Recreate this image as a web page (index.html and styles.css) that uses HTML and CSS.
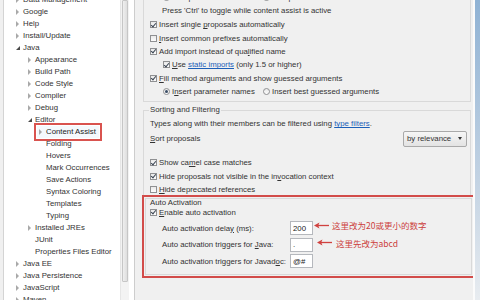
FILE: index.html
```html
<!DOCTYPE html>
<html>
<head>
<meta charset="utf-8">
<title>Preferences - Content Assist</title>
<link rel="stylesheet" href="styles.css">
</head>
<body>
<div class="window">
  <div class="tree-pane">
    <ul class="tree">
      <li class="node l0"><span class="tw col"></span><span>Data Management</span></li>
      <li class="node l0"><span class="tw col"></span><span>Google</span></li>
      <li class="node l0"><span class="tw col"></span><span>Help</span></li>
      <li class="node l0"><span class="tw col"></span><span>Install/Update</span></li>
      <li class="node l0"><span class="tw exp"></span><span>Java</span></li>
      <li class="node l1"><span class="tw col"></span><span>Appearance</span></li>
      <li class="node l1"><span class="tw col"></span><span>Build Path</span></li>
      <li class="node l1"><span class="tw col"></span><span>Code Style</span></li>
      <li class="node l1"><span class="tw col"></span><span>Compiler</span></li>
      <li class="node l1"><span class="tw col"></span><span>Debug</span></li>
      <li class="node l1"><span class="tw exp"></span><span>Editor</span></li>
      <li class="node l2 sel-row"><span class="sel"><span class="tw col"></span><span>Content Assist</span></span></li>
      <li class="node l2"><span class="tw"></span><span>Folding</span></li>
      <li class="node l2"><span class="tw"></span><span>Hovers</span></li>
      <li class="node l2"><span class="tw"></span><span>Mark Occurrences</span></li>
      <li class="node l2"><span class="tw"></span><span>Save Actions</span></li>
      <li class="node l2"><span class="tw"></span><span>Syntax Coloring</span></li>
      <li class="node l2"><span class="tw"></span><span>Templates</span></li>
      <li class="node l2"><span class="tw"></span><span>Typing</span></li>
      <li class="node l1"><span class="tw col"></span><span>Installed JREs</span></li>
      <li class="node l1"><span class="tw"></span><span>JUnit</span></li>
      <li class="node l1"><span class="tw"></span><span>Properties Files Editor</span></li>
      <li class="node l0"><span class="tw col"></span><span>Java EE</span></li>
      <li class="node l0"><span class="tw col"></span><span>Java Persistence</span></li>
      <li class="node l0"><span class="tw col"></span><span>JavaScript</span></li>
      <li class="node l0"><span class="tw col"></span><span>Maven</span></li>
    </ul>
    <div class="vscroll"><div class="thumb"></div></div>
  </div>

  <div class="main">
    <div class="group insertion">
      <div class="row sub radios top-row">
        <label class="opt first"><span class="rb on"></span><span>Completion inserts</span></label>
        <label class="opt"><span class="rb"></span><span>Completion overwrites</span></label>
      </div>
      <div class="row hint"><span>Press 'Ctrl' to toggle while content assist is active</span></div>
      <div class="row ck first-ck"><span class="cb on"></span><span>Insert single <u>p</u>roposals automatically</span></div>
      <div class="row ck"><span class="cb"></span><span><u>I</u>nsert common prefixes automatically</span></div>
      <div class="row ck"><span class="cb on"></span><span>Add import instead of qua<u>l</u>ified name</span></div>
      <div class="row ck sub"><span class="cb on"></span><span><u>U</u>se <a class="link">static imports</a> (only 1.5 or higher)</span></div>
      <div class="row ck"><span class="cb on"></span><span><u>F</u>ill method arguments and show guessed arguments</span></div>
      <div class="row ck sub radios">
        <label class="opt first"><span class="rb on"></span><span>I<u>n</u>sert parameter names</span></label>
        <label class="opt"><span class="rb"></span><span>Insert best guessed arguments</span></label>
      </div>
    </div>

    <div class="group sorting">
      <div class="gtitle">Sorting and Filtering</div>
      <div class="row types"><span>Types along with their members can be filtered using <a class="link">type filters</a>.</span></div>
      <div class="row sortrow">
        <span><u>S</u>ort proposals</span>
        <span class="select"><span>by relevance</span><span class="caret"></span></span>
      </div>
      <div class="row ck2 first-ck2"><span class="cb on"></span><span>Show ca<u>m</u>el case matches</span></div>
      <div class="row ck2"><span class="cb on"></span><span>Hide proposals not visible in the in<u>v</u>ocation context</span></div>
      <div class="row ck2"><span class="cb"></span><span><u>H</u>ide deprecated references</span></div>
    </div>

    <div class="annot">
      <div class="group auto">
        <div class="row atitle"><span>Auto Activation</span></div>
        <div class="row enable"><span class="cb on"></span><span><u>E</u>nable auto activation</span></div>
        <div class="row field first-field">
          <span class="flabel">Auto activation dela<u>y</u> (ms):</span>
          <span class="input">200</span>
          <span class="note">
            <svg class="arrow" width="15" height="7" viewBox="0 0 15 7"><line x1="3" y1="3.5" x2="15" y2="3.5" stroke="#d0413f" stroke-width="1.3"/><polygon points="0,3.5 5.5,0.6 4.2,3.5 5.5,6.4" fill="#d0413f"/></svg>
            <span class="ntext">这里改为20或更小的数字</span>
          </span>
        </div>
        <div class="row field">
          <span class="flabel">Auto activation triggers for <u>J</u>ava:</span>
          <span class="input">.</span>
          <span class="note n2">
            <svg class="arrow" width="15" height="7" viewBox="0 0 15 7"><line x1="3" y1="3.5" x2="15" y2="3.5" stroke="#d0413f" stroke-width="1.3"/><polygon points="0,3.5 5.5,0.6 4.2,3.5 5.5,6.4" fill="#d0413f"/></svg>
            <span class="ntext">这里先改为abcd</span>
          </span>
        </div>
        <div class="row field">
          <span class="flabel">Auto activation triggers for Javad<u>o</u>c:</span>
          <span class="input">@#</span>
        </div>
      </div>
    </div>
  </div>

  <div class="frame"></div>
</div>
</body>
</html>
```

FILE: styles.css
```css
* { box-sizing: border-box; margin: 0; padding: 0; }
html, body { width: 480px; height: 300px; overflow: hidden; }
body {
  background: #f0f0f0;
  font-family: "Liberation Sans", Arial, sans-serif;
  font-size: 7.8px;
  color: #333;
}
u { text-decoration: underline; text-underline-offset: 1px; }

.window { display: flex; height: 300px; }

/* ---------- tree ---------- */
.tree-pane {
  width: 132px;
  margin-left: 3px;
  display: flex;
  background: #fff;
  border-left: 1px solid #d4d4d4;
  border-right: 1px solid #cdcdcd;
  padding-right: 5px;
}
.tree {
  list-style: none;
  width: 116px;
  margin-top: -6px;
  overflow: hidden;
}
.node {
  height: 12px;
  line-height: 12px;
  display: flex;
  align-items: center;
  white-space: nowrap;
  color: #333;
}
.l0 { padding-left: 12px; }
.l1 { padding-left: 24px; }
.l2 { padding-left: 35px; }
.tw { width: 7px; height: 12px; flex: none; display: flex; align-items: center; }
.tw.col::before {
  content: "";
  width: 0; height: 0;
  border-left: 3.5px solid #a9a9a9;
  border-top: 3.5px solid transparent;
  border-bottom: 3.5px solid transparent;
}
.tw.exp::before {
  content: "";
  width: 0; height: 0;
  border-bottom: 4px solid #4a4a4a;
  border-left: 4px solid transparent;
}
.sel-row { padding-left: 33px; }
.sel {
  display: flex;
  align-items: center;
  height: 12px;
  padding: 0 3px 0 2px;
  background: #f4f9fd;
  outline: 2px solid #d9534f;
  outline-offset: 1px;
  color: #222;
}

.vscroll {
  width: 9px;
  background: #f3f3f3;
  border-left: 1px solid #e6e6e6;
  padding: 0 1px;
}
.vscroll .thumb {
  height: 282px;
  border: 1px solid #c6c6c6;
  border-radius: 1px;
  background: linear-gradient(90deg, #efefef, #dedede);
}

/* ---------- main ---------- */
.main {
  flex: 1;
  padding: 0 2px 0 8px;
}
.group {
  border: 1px solid #d9d9d9;
}
.row {
  display: flex;
  align-items: center;
  white-space: nowrap;
}
.insertion {
  margin-top: -15px;
  padding: 4px 0 2.6px 6px;
}
.top-row { height: 14px; }
.hint { height: 13px; padding-left: 12px; }
.ck { height: 13.4px; }
.first-ck { margin-top: 1px; }
.sub { padding-left: 13px; }
.opt { display: flex; align-items: center; }
.opt.first { width: 100px; }

.cb {
  width: 7px; height: 7px;
  flex: none;
  margin-right: 2px;
  border: 1px solid #8f9092;
  background: linear-gradient(#e9e9e9, #fdfdfd);
  display: flex;
  align-items: center;
  justify-content: center;
}
.cb.on::after {
  content: "";
  width: 2px; height: 4px;
  margin-top: -1px;
  border-right: 1.4px solid #3a4553;
  border-bottom: 1.4px solid #3a4553;
  transform: rotate(40deg);
}
.rb {
  width: 7px; height: 7px;
  flex: none;
  margin-right: 2px;
  border: 1px solid #8f9092;
  border-radius: 50%;
  background: linear-gradient(#e9e9e9, #fdfdfd);
  display: flex;
  align-items: center;
  justify-content: center;
}
.rb.on::after {
  content: "";
  width: 3px; height: 3px;
  border-radius: 50%;
  background: #3b4e66;
}
.link { color: #1c5fb8; text-decoration: underline; }

.sorting {
  margin-top: 8px;
  padding: 0 3px 0 6px;
  border-bottom: 0;
}
.gtitle {
  width: max-content;
  height: 12px;
  line-height: 12px;
  margin: -7px 0 0 -1px;
  padding: 0 1px;
  background: #f0f0f0;
}
.types { height: 14px; margin-top: 1px; }
.sortrow { height: 16px; justify-content: space-between; }
.select {
  width: 64px;
  height: 16px;
  border: 1px solid #a9a9a9;
  border-radius: 2px;
  background: linear-gradient(#f6f6f6, #e3e3e3);
  display: flex;
  align-items: center;
  justify-content: space-between;
  padding: 0 4px 0 3px;
  color: #333;
}
.caret {
  width: 0; height: 0;
  border-top: 3px solid #333;
  border-left: 2.5px solid transparent;
  border-right: 2.5px solid transparent;
}
.ck2 { height: 13.5px; }
.first-ck2 { margin-top: 9px; }

/* ---------- annotated auto activation ---------- */
.annot {
  margin: -1.5px -4px 0 -1px;
  border: 2px solid #d24c4a;
}
.auto {
  margin: 1px;
  padding: 0 0 4.5px 4px;
}
.atitle { height: 7px; line-height: 7px; }
.enable { height: 13px; }
.field { height: 16.5px; padding-left: 12px; }
.first-field { margin-top: 1px; }
.flabel { width: 128px; flex: none; }
.input {
  width: 23px;
  height: 14px;
  flex: none;
  background: #fff;
  border: 1px solid #b5b8bd;
  padding-left: 2px;
  display: flex;
  align-items: center;
  color: #222;
}
.note {
  display: flex;
  align-items: center;
  margin: 0 0 6px 1px;
}
.note.n2 { margin-left: 4px; margin-bottom: 4px; }
.arrow { flex: none; margin-right: 3px; }
.n2 .arrow { margin-right: 4px; }
.ntext {
  font-family: "Noto Sans CJK SC", "Liberation Sans", sans-serif;
  font-size: 8.5px;
  line-height: 10px;
  color: #cc3e3c;
}

.frame {
  width: 7px;
  border-left: 2px solid #fbfbfb;
  background: linear-gradient(#8fb2d4, #c3d3e3 60%, #e8ecf0);
}
```
